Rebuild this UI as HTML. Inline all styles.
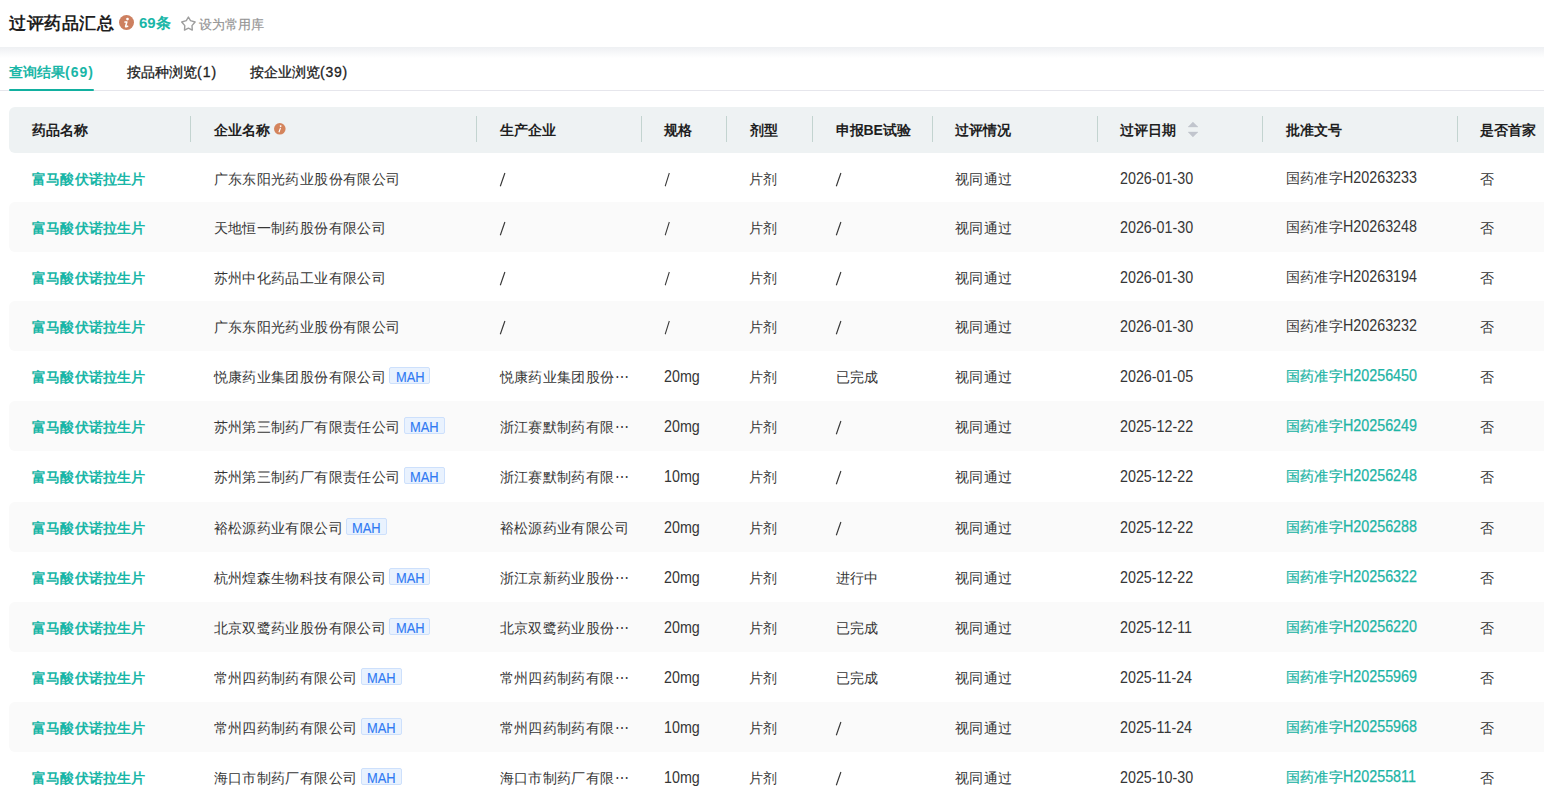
<!DOCTYPE html><html><head><meta charset="utf-8"><title>过评药品汇总</title><style>
*{box-sizing:border-box;margin:0;padding:0}
html,body{width:1544px;height:791px;overflow:hidden;background:#fff}
body{position:relative;font-family:"Liberation Sans",sans-serif;font-size:14px;color:#363636}
.abs{position:absolute;white-space:nowrap}
.topbar{position:absolute;left:0;top:0;width:1544px;height:47px;background:#fff}
.shadow{position:absolute;left:0;top:47px;width:1544px;height:11px;background:linear-gradient(#eef0f3,#ffffff)}
.title{left:9px;top:12px;font-size:17px;letter-spacing:.5px;font-weight:bold;color:#1f1f1f;line-height:24px}
.cnt{left:139px;top:13px;font-size:15px;font-weight:bold;color:#19b6a7;line-height:20px}
.fav{left:199px;top:15.5px;font-size:13px;color:#959595;line-height:18px;-webkit-text-stroke:.2px #959595}
.tab{top:63px;font-size:14px;line-height:18px;color:#222;-webkit-text-stroke:.3px #222}
.tab.act{color:#19b6a7;font-weight:bold;-webkit-text-stroke:0}
.tabline{position:absolute;left:0;top:90px;width:1544px;height:1px;background:#e6e6ec}
.tabul{position:absolute;left:9px;top:89px;width:85px;height:2px;border-radius:1px;background:#12b0a0}
.thead{position:absolute;left:9px;top:107px;width:1560px;height:46px;background:#eef2f3;border-radius:6px 0 0 6px}
.th{top:107px;line-height:46px;font-weight:bold;color:#1f1f1f}
.div{position:absolute;top:116px;width:1px;height:26px;background:#c3d4d0}
.row{position:absolute;left:9px;width:1560px;height:50px;border-radius:6px 0 0 6px}
.row.alt{background:#fafafa}
.td{line-height:50px;margin-top:1px;letter-spacing:.4px}
.lat{font-size:15.8px;letter-spacing:0;display:inline-block;transform:scaleX(.905);transform-origin:0 50%}
.drug{color:#19b6a7;font-weight:bold;letter-spacing:.2px}
.link{color:#1db4a5;-webkit-text-stroke:.25px #1db4a5}
.ap{margin-top:0}
.mah{display:inline-block;vertical-align:top;margin-top:15px;margin-left:3px;width:41px;height:17px;line-height:15px;text-align:center;font-size:15.5px;color:#2f7af3;-webkit-text-stroke:.15px #2f7af3;background:#e9f2fe;border:1px solid #cde0fc;border-radius:2px;letter-spacing:0}
.mah i{font-style:normal;display:inline-block;transform:scaleX(.83);position:relative;top:1px}
.sort{position:absolute}
</style></head><body>
<div class="topbar"></div><div class="shadow"></div>
<div class="abs title">过评药品汇总</div>
<svg class="abs" style="left:119px;top:14.8px" width="15" height="15" viewBox="0 0 15 15"><circle cx="7.5" cy="7.5" r="7.5" fill="#cd8060"/><circle cx="8.5" cy="4.1" r="1.35" fill="#fff"/><path d="M6.0 7.1 L7.9 6.9 L6.6 11.3 Q6.4 12.0 7.1 11.8 L8.7 11.3" fill="none" stroke="#fff" stroke-width="1.5" stroke-linecap="round" stroke-linejoin="round"/></svg>
<div class="abs cnt">69条</div>
<svg class="abs" style="left:178px;top:13px" width="21" height="20" viewBox="0 0 21 20"><path d="M10.4 4.0 L12.5 7.7 L17.1 9.0 L14.0 12.6 L14.3 17.1 L10.4 15.1 L6.5 17.1 L6.8 12.6 L3.7 9.0 L8.3 7.7 Z" fill="none" stroke="#9e9e9e" stroke-width="1.4" stroke-linejoin="round"/></svg>
<div class="abs fav">设为常用库</div>
<div class="abs tab act" style="left:9px">查询结果<span style="letter-spacing:1px">(69)</span></div>
<div class="abs tab" style="left:127px">按品种浏览<span style="letter-spacing:1px">(1)</span></div>
<div class="abs tab" style="left:250px">按企业浏览<span style="letter-spacing:0.75px">(39)</span></div>
<div class="tabline"></div><div class="tabul"></div>
<div class="thead"></div>
<div class="abs th" style="left:32px">药品名称</div>
<div class="abs th" style="left:213.5px">企业名称</div>
<div class="abs th" style="left:499.5px">生产企业</div>
<div class="abs th" style="left:664px">规格</div>
<div class="abs th" style="left:749.5px">剂型</div>
<div class="abs th" style="left:835.5px">申报BE试验</div>
<div class="abs th" style="left:955px">过评情况</div>
<div class="abs th" style="left:1120px">过评日期</div>
<div class="abs th" style="left:1285.5px">批准文号</div>
<div class="abs th" style="left:1480px">是否首家</div>
<div class="div" style="left:190px"></div>
<div class="div" style="left:476px"></div>
<div class="div" style="left:641px"></div>
<div class="div" style="left:726px"></div>
<div class="div" style="left:812px"></div>
<div class="div" style="left:932px"></div>
<div class="div" style="left:1097px"></div>
<div class="div" style="left:1262px"></div>
<div class="div" style="left:1457px"></div>
<svg class="abs" style="left:274px;top:123.1px" width="11.6" height="11.6" viewBox="0 0 15 15"><circle cx="7.5" cy="7.5" r="7.5" fill="#d4845c"/><circle cx="8.6" cy="4.0" r="1.2" fill="#fff"/><path d="M8.2 7.0 L6.6 11.4" fill="none" stroke="#fff" stroke-width="1.5" stroke-linecap="round"/></svg>
<svg class="sort" style="left:1182px;top:116px" width="22" height="26" viewBox="0 0 22 26"><path d="M10.9 6.1 L16 10.9 L6.1 10.9 Z" fill="#c1c5cd" stroke="#c1c5cd" stroke-width=".4" stroke-linejoin="round"/><path d="M6.1 16.1 L16 16.1 L10.9 20.9 Z" fill="#c1c5cd" stroke="#c1c5cd" stroke-width=".4" stroke-linejoin="round"/></svg>
<div class="row" style="top:153px;height:49px"></div>
<div class="abs td drug" style="left:32px;top:153px">富马酸伏诺拉生片</div>
<div class="abs td" style="left:213.5px;top:153px">广东东阳光药业股份有限公司</div>
<div class="abs td" style="left:499.5px;top:153px"><svg width="7" height="15" viewBox="0 0 7 15" style="position:absolute;left:-0.5px;top:17.5px"><path d="M1.3 14.2 L5.9 1.0" stroke="#363636" stroke-width="1.15"/></svg></div>
<div class="abs td lat" style="left:664px;top:153px"><svg width="7" height="15" viewBox="0 0 7 15" style="position:absolute;left:-0.5px;top:17.5px"><path d="M1.3 14.2 L5.9 1.0" stroke="#363636" stroke-width="1.15"/></svg></div>
<div class="abs td" style="left:748.5px;top:153px">片剂</div>
<div class="abs td" style="left:835.5px;top:153px"><svg width="7" height="15" viewBox="0 0 7 15" style="position:absolute;left:-0.5px;top:17.5px"><path d="M1.3 14.2 L5.9 1.0" stroke="#363636" stroke-width="1.15"/></svg></div>
<div class="abs td" style="left:955px;top:153px">视同通过</div>
<div class="abs td lat" style="left:1120px;top:153px">2026-01-30</div>
<div class="abs td ap" style="left:1285.5px;top:153px">国药准字<span class="lat">H20263233</span></div>
<div class="abs td" style="left:1480px;top:153px">否</div>
<div class="row alt" style="top:202px;height:50px"></div>
<div class="abs td drug" style="left:32px;top:202px">富马酸伏诺拉生片</div>
<div class="abs td" style="left:213.5px;top:202px">天地恒一制药股份有限公司</div>
<div class="abs td" style="left:499.5px;top:202px"><svg width="7" height="15" viewBox="0 0 7 15" style="position:absolute;left:-0.5px;top:17.5px"><path d="M1.3 14.2 L5.9 1.0" stroke="#363636" stroke-width="1.15"/></svg></div>
<div class="abs td lat" style="left:664px;top:202px"><svg width="7" height="15" viewBox="0 0 7 15" style="position:absolute;left:-0.5px;top:17.5px"><path d="M1.3 14.2 L5.9 1.0" stroke="#363636" stroke-width="1.15"/></svg></div>
<div class="abs td" style="left:748.5px;top:202px">片剂</div>
<div class="abs td" style="left:835.5px;top:202px"><svg width="7" height="15" viewBox="0 0 7 15" style="position:absolute;left:-0.5px;top:17.5px"><path d="M1.3 14.2 L5.9 1.0" stroke="#363636" stroke-width="1.15"/></svg></div>
<div class="abs td" style="left:955px;top:202px">视同通过</div>
<div class="abs td lat" style="left:1120px;top:202px">2026-01-30</div>
<div class="abs td ap" style="left:1285.5px;top:202px">国药准字<span class="lat">H20263248</span></div>
<div class="abs td" style="left:1480px;top:202px">否</div>
<div class="row" style="top:252px;height:49px"></div>
<div class="abs td drug" style="left:32px;top:252px">富马酸伏诺拉生片</div>
<div class="abs td" style="left:213.5px;top:252px">苏州中化药品工业有限公司</div>
<div class="abs td" style="left:499.5px;top:252px"><svg width="7" height="15" viewBox="0 0 7 15" style="position:absolute;left:-0.5px;top:17.5px"><path d="M1.3 14.2 L5.9 1.0" stroke="#363636" stroke-width="1.15"/></svg></div>
<div class="abs td lat" style="left:664px;top:252px"><svg width="7" height="15" viewBox="0 0 7 15" style="position:absolute;left:-0.5px;top:17.5px"><path d="M1.3 14.2 L5.9 1.0" stroke="#363636" stroke-width="1.15"/></svg></div>
<div class="abs td" style="left:748.5px;top:252px">片剂</div>
<div class="abs td" style="left:835.5px;top:252px"><svg width="7" height="15" viewBox="0 0 7 15" style="position:absolute;left:-0.5px;top:17.5px"><path d="M1.3 14.2 L5.9 1.0" stroke="#363636" stroke-width="1.15"/></svg></div>
<div class="abs td" style="left:955px;top:252px">视同通过</div>
<div class="abs td lat" style="left:1120px;top:252px">2026-01-30</div>
<div class="abs td ap" style="left:1285.5px;top:252px">国药准字<span class="lat">H20263194</span></div>
<div class="abs td" style="left:1480px;top:252px">否</div>
<div class="row alt" style="top:301px;height:50px"></div>
<div class="abs td drug" style="left:32px;top:301px">富马酸伏诺拉生片</div>
<div class="abs td" style="left:213.5px;top:301px">广东东阳光药业股份有限公司</div>
<div class="abs td" style="left:499.5px;top:301px"><svg width="7" height="15" viewBox="0 0 7 15" style="position:absolute;left:-0.5px;top:17.5px"><path d="M1.3 14.2 L5.9 1.0" stroke="#363636" stroke-width="1.15"/></svg></div>
<div class="abs td lat" style="left:664px;top:301px"><svg width="7" height="15" viewBox="0 0 7 15" style="position:absolute;left:-0.5px;top:17.5px"><path d="M1.3 14.2 L5.9 1.0" stroke="#363636" stroke-width="1.15"/></svg></div>
<div class="abs td" style="left:748.5px;top:301px">片剂</div>
<div class="abs td" style="left:835.5px;top:301px"><svg width="7" height="15" viewBox="0 0 7 15" style="position:absolute;left:-0.5px;top:17.5px"><path d="M1.3 14.2 L5.9 1.0" stroke="#363636" stroke-width="1.15"/></svg></div>
<div class="abs td" style="left:955px;top:301px">视同通过</div>
<div class="abs td lat" style="left:1120px;top:301px">2026-01-30</div>
<div class="abs td ap" style="left:1285.5px;top:301px">国药准字<span class="lat">H20263232</span></div>
<div class="abs td" style="left:1480px;top:301px">否</div>
<div class="row" style="top:351px;height:50px"></div>
<div class="abs td drug" style="left:32px;top:351px">富马酸伏诺拉生片</div>
<div class="abs td" style="left:213.5px;top:351px">悦康药业集团股份有限公司<span class="mah"><i>MAH</i></span></div>
<div class="abs td" style="left:499.5px;top:351px">悦康药业集团股份⋯</div>
<div class="abs td lat" style="left:664px;top:351px">20mg</div>
<div class="abs td" style="left:748.5px;top:351px">片剂</div>
<div class="abs td" style="left:835.5px;top:351px">已完成</div>
<div class="abs td" style="left:955px;top:351px">视同通过</div>
<div class="abs td lat" style="left:1120px;top:351px">2026-01-05</div>
<div class="abs td ap link" style="left:1285.5px;top:351px">国药准字<span class="lat">H20256450</span></div>
<div class="abs td" style="left:1480px;top:351px">否</div>
<div class="row alt" style="top:401px;height:50px"></div>
<div class="abs td drug" style="left:32px;top:401px">富马酸伏诺拉生片</div>
<div class="abs td" style="left:213.5px;top:401px">苏州第三制药厂有限责任公司<span class="mah"><i>MAH</i></span></div>
<div class="abs td" style="left:499.5px;top:401px">浙江赛默制药有限⋯</div>
<div class="abs td lat" style="left:664px;top:401px">20mg</div>
<div class="abs td" style="left:748.5px;top:401px">片剂</div>
<div class="abs td" style="left:835.5px;top:401px"><svg width="7" height="15" viewBox="0 0 7 15" style="position:absolute;left:-0.5px;top:17.5px"><path d="M1.3 14.2 L5.9 1.0" stroke="#363636" stroke-width="1.15"/></svg></div>
<div class="abs td" style="left:955px;top:401px">视同通过</div>
<div class="abs td lat" style="left:1120px;top:401px">2025-12-22</div>
<div class="abs td ap link" style="left:1285.5px;top:401px">国药准字<span class="lat">H20256249</span></div>
<div class="abs td" style="left:1480px;top:401px">否</div>
<div class="row" style="top:451px;height:51px"></div>
<div class="abs td drug" style="left:32px;top:451px">富马酸伏诺拉生片</div>
<div class="abs td" style="left:213.5px;top:451px">苏州第三制药厂有限责任公司<span class="mah"><i>MAH</i></span></div>
<div class="abs td" style="left:499.5px;top:451px">浙江赛默制药有限⋯</div>
<div class="abs td lat" style="left:664px;top:451px">10mg</div>
<div class="abs td" style="left:748.5px;top:451px">片剂</div>
<div class="abs td" style="left:835.5px;top:451px"><svg width="7" height="15" viewBox="0 0 7 15" style="position:absolute;left:-0.5px;top:17.5px"><path d="M1.3 14.2 L5.9 1.0" stroke="#363636" stroke-width="1.15"/></svg></div>
<div class="abs td" style="left:955px;top:451px">视同通过</div>
<div class="abs td lat" style="left:1120px;top:451px">2025-12-22</div>
<div class="abs td ap link" style="left:1285.5px;top:451px">国药准字<span class="lat">H20256248</span></div>
<div class="abs td" style="left:1480px;top:451px">否</div>
<div class="row alt" style="top:502px;height:50px"></div>
<div class="abs td drug" style="left:32px;top:502px">富马酸伏诺拉生片</div>
<div class="abs td" style="left:213.5px;top:502px">裕松源药业有限公司<span class="mah"><i>MAH</i></span></div>
<div class="abs td" style="left:499.5px;top:502px">裕松源药业有限公司</div>
<div class="abs td lat" style="left:664px;top:502px">20mg</div>
<div class="abs td" style="left:748.5px;top:502px">片剂</div>
<div class="abs td" style="left:835.5px;top:502px"><svg width="7" height="15" viewBox="0 0 7 15" style="position:absolute;left:-0.5px;top:17.5px"><path d="M1.3 14.2 L5.9 1.0" stroke="#363636" stroke-width="1.15"/></svg></div>
<div class="abs td" style="left:955px;top:502px">视同通过</div>
<div class="abs td lat" style="left:1120px;top:502px">2025-12-22</div>
<div class="abs td ap link" style="left:1285.5px;top:502px">国药准字<span class="lat">H20256288</span></div>
<div class="abs td" style="left:1480px;top:502px">否</div>
<div class="row" style="top:552px;height:50px"></div>
<div class="abs td drug" style="left:32px;top:552px">富马酸伏诺拉生片</div>
<div class="abs td" style="left:213.5px;top:552px">杭州煌森生物科技有限公司<span class="mah"><i>MAH</i></span></div>
<div class="abs td" style="left:499.5px;top:552px">浙江京新药业股份⋯</div>
<div class="abs td lat" style="left:664px;top:552px">20mg</div>
<div class="abs td" style="left:748.5px;top:552px">片剂</div>
<div class="abs td" style="left:835.5px;top:552px">进行中</div>
<div class="abs td" style="left:955px;top:552px">视同通过</div>
<div class="abs td lat" style="left:1120px;top:552px">2025-12-22</div>
<div class="abs td ap link" style="left:1285.5px;top:552px">国药准字<span class="lat">H20256322</span></div>
<div class="abs td" style="left:1480px;top:552px">否</div>
<div class="row alt" style="top:602px;height:50px"></div>
<div class="abs td drug" style="left:32px;top:602px">富马酸伏诺拉生片</div>
<div class="abs td" style="left:213.5px;top:602px">北京双鹭药业股份有限公司<span class="mah"><i>MAH</i></span></div>
<div class="abs td" style="left:499.5px;top:602px">北京双鹭药业股份⋯</div>
<div class="abs td lat" style="left:664px;top:602px">20mg</div>
<div class="abs td" style="left:748.5px;top:602px">片剂</div>
<div class="abs td" style="left:835.5px;top:602px">已完成</div>
<div class="abs td" style="left:955px;top:602px">视同通过</div>
<div class="abs td lat" style="left:1120px;top:602px">2025-12-11</div>
<div class="abs td ap link" style="left:1285.5px;top:602px">国药准字<span class="lat">H20256220</span></div>
<div class="abs td" style="left:1480px;top:602px">否</div>
<div class="row" style="top:652px;height:50px"></div>
<div class="abs td drug" style="left:32px;top:652px">富马酸伏诺拉生片</div>
<div class="abs td" style="left:213.5px;top:652px">常州四药制药有限公司<span class="mah"><i>MAH</i></span></div>
<div class="abs td" style="left:499.5px;top:652px">常州四药制药有限⋯</div>
<div class="abs td lat" style="left:664px;top:652px">20mg</div>
<div class="abs td" style="left:748.5px;top:652px">片剂</div>
<div class="abs td" style="left:835.5px;top:652px">已完成</div>
<div class="abs td" style="left:955px;top:652px">视同通过</div>
<div class="abs td lat" style="left:1120px;top:652px">2025-11-24</div>
<div class="abs td ap link" style="left:1285.5px;top:652px">国药准字<span class="lat">H20255969</span></div>
<div class="abs td" style="left:1480px;top:652px">否</div>
<div class="row alt" style="top:702px;height:50px"></div>
<div class="abs td drug" style="left:32px;top:702px">富马酸伏诺拉生片</div>
<div class="abs td" style="left:213.5px;top:702px">常州四药制药有限公司<span class="mah"><i>MAH</i></span></div>
<div class="abs td" style="left:499.5px;top:702px">常州四药制药有限⋯</div>
<div class="abs td lat" style="left:664px;top:702px">10mg</div>
<div class="abs td" style="left:748.5px;top:702px">片剂</div>
<div class="abs td" style="left:835.5px;top:702px"><svg width="7" height="15" viewBox="0 0 7 15" style="position:absolute;left:-0.5px;top:17.5px"><path d="M1.3 14.2 L5.9 1.0" stroke="#363636" stroke-width="1.15"/></svg></div>
<div class="abs td" style="left:955px;top:702px">视同通过</div>
<div class="abs td lat" style="left:1120px;top:702px">2025-11-24</div>
<div class="abs td ap link" style="left:1285.5px;top:702px">国药准字<span class="lat">H20255968</span></div>
<div class="abs td" style="left:1480px;top:702px">否</div>
<div class="row" style="top:752px;height:50px"></div>
<div class="abs td drug" style="left:32px;top:752px">富马酸伏诺拉生片</div>
<div class="abs td" style="left:213.5px;top:752px">海口市制药厂有限公司<span class="mah"><i>MAH</i></span></div>
<div class="abs td" style="left:499.5px;top:752px">海口市制药厂有限⋯</div>
<div class="abs td lat" style="left:664px;top:752px">10mg</div>
<div class="abs td" style="left:748.5px;top:752px">片剂</div>
<div class="abs td" style="left:835.5px;top:752px"><svg width="7" height="15" viewBox="0 0 7 15" style="position:absolute;left:-0.5px;top:17.5px"><path d="M1.3 14.2 L5.9 1.0" stroke="#363636" stroke-width="1.15"/></svg></div>
<div class="abs td" style="left:955px;top:752px">视同通过</div>
<div class="abs td lat" style="left:1120px;top:752px">2025-10-30</div>
<div class="abs td ap link" style="left:1285.5px;top:752px">国药准字<span class="lat">H20255811</span></div>
<div class="abs td" style="left:1480px;top:752px">否</div>
</body></html>
